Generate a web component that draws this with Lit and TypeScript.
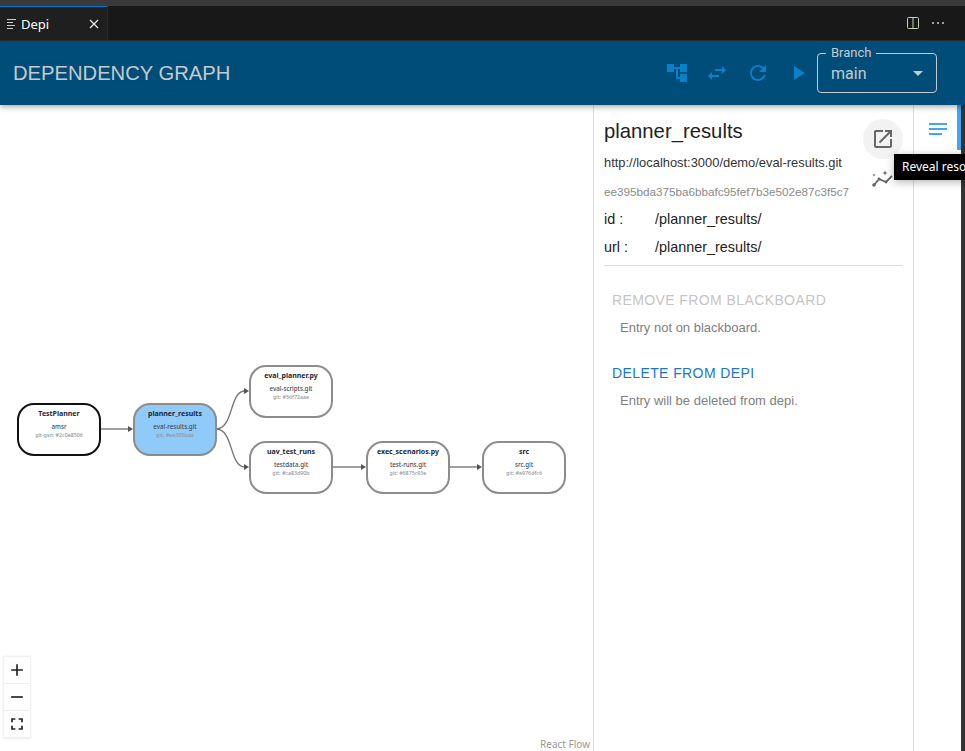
import { LitElement, html, css, svg } from "lit";
import { customElement } from "lit/decorators.js";

const mi = (d: string, size = 24) => html`<svg width=${size} height=${size} viewBox="0 0 24 24" fill="currentColor"><path d=${d}></path></svg>`;

const NODES = [
  { x: 17, y: 403, title: "TestPlanner", sub: "amsr", hash: "git-gsn: #2c0e8506", cls: "root" },
  { x: 133, y: 403, title: "planner_results", sub: "eval-results.git", hash: "git: #ee395bda", cls: "selected" },
  { x: 249, y: 365, title: "eval_planner.py", sub: "eval-scripts.git", hash: "git: #56f72aae", cls: "" },
  { x: 249, y: 441, title: "uav_test_runs", sub: "testdata.git", hash: "git: #ca83d90b", cls: "" },
  { x: 366, y: 441, title: "exec_scenarios.py", sub: "test-runs.git", hash: "git: #6875c93e", cls: "" },
  { x: 482, y: 441, title: "src", sub: "src.git", hash: "git: #e976dfc6", cls: "" },
];

const EDGES = [
  "M100 429 L129 429",
  "M216 429 C234 429 229 391 245 391",
  "M216 429 C234 429 229 467 245 467",
  "M332 467 L362 467",
  "M449 467 L478 467",
];

const ARROWS = [[133, 429], [249, 391], [249, 467], [366, 467], [482, 467]];

@customElement("app-root")
export class AppRoot extends LitElement {
  static styles = css`
    :host {
      display: flex;
      flex-direction: column;
      width: 965px;
      height: 751px;
      overflow: hidden;
      background: #fff;
      font-family: "Liberation Sans", sans-serif;
      position: relative;
    }
    .strip {
      height: 6px;
      background: #3a3a3a;
      flex: none;
    }
    .tabbar {
      height: 35px;
      flex: none;
      background: #181818;
      display: flex;
      justify-content: space-between;
      box-sizing: border-box;
      border-bottom: 1px solid #2b2b2b;
    }
    .tab {
      width: 108px;
      box-sizing: border-box;
      background: #1f1f1f;
      border-top: 1px solid #0078d4;
      border-right: 1px solid #2b2b2b;
      display: flex;
      align-items: center;
      padding: 0 7px;
      color: #fff;
      font: 13px "Noto Sans", sans-serif;
    }
    .tab .name {
      flex: 1;
    }
    .tab svg {
      display: block;
    }
    .actions {
      display: flex;
      align-items: center;
      gap: 11px;
      padding-right: 20px;
      color: #ccc;
    }
    .appbar {
      height: 64px;
      flex: none;
      background: #004d7a;
      display: flex;
      align-items: center;
      padding: 0 28px 0 13px;
      box-shadow: 0 2px 4px -1px rgba(0, 0, 0, 0.2), 0 4px 5px rgba(0, 0, 0, 0.14);
      position: relative;
      z-index: 2;
    }
    .appbar h1 {
      flex: 1;
      margin: 0;
      font-size: 20.2px;
      font-weight: 400;
      color: #c4cacd;
    }
    .tools {
      display: flex;
      align-items: center;
      color: #0a80c8;
      gap: 16.5px;
      margin-right: 7px;
    }
    .tools svg {
      display: block;
    }
    .branch {
      width: 120px;
      height: 40px;
      box-sizing: border-box;
      border: 1px solid #c4cacd;
      border-radius: 4px;
      display: flex;
      align-items: center;
      justify-content: space-between;
      padding: 0 13px;
      color: #c4cacd;
      font: 16px Roboto, sans-serif;
      position: relative;
    }
    .branch label {
      position: absolute;
      left: 8px;
      top: -9px;
      padding: 0 5px;
      background: #004d7a;
      font-size: 13px;
      line-height: 15px;
    }
    .caret {
      width: 0;
      height: 0;
      border-left: 5px solid transparent;
      border-right: 5px solid transparent;
      border-top: 5px solid #c4cacd;
    }
    .main {
      flex: 1;
      display: flex;
      min-height: 0;
    }
    .graph {
      width: 593px;
      flex: none;
      position: relative;
    }
    .graph > svg {
      position: absolute;
      left: 0;
      top: -105px;
      width: 593px;
      height: 751px;
    }
    .node {
      position: absolute;
      width: 84px;
      height: 53px;
      box-sizing: border-box;
      border: 2px solid #8c8c8c;
      border-radius: 17px;
      background: #fff;
      display: flex;
      flex-direction: column;
      align-items: center;
      padding-top: 4px;
      font-family: "Noto Sans", sans-serif;
      color: #3f4d5c;
      font-size: 6.2px;
      font-weight: 500;
      line-height: 8px;
    }
    .node.root {
      border-color: #111;
    }
    .node.selected {
      background: #90caf9;
    }
    .node b {
      font-size: 7px;
      line-height: 10px;
      color: #1d2733;
      margin-bottom: 4px;
    }
    .node .rev {
      color: #8f959b;
      font-size: 5.3px;
      line-height: 9px;
    }
    .zoom {
      position: absolute;
      left: 4px;
      bottom: 13px;
      width: 26px;
      background: #fefefe;
      box-shadow: 0 0 2px 1px rgba(0, 0, 0, 0.08);
      display: flex;
      flex-direction: column;
      color: #222;
    }
    .zoom div {
      height: 27px;
      box-sizing: border-box;
      border-bottom: 1px solid #eee;
      display: flex;
      align-items: center;
      justify-content: center;
    }
    .attribution {
      position: absolute;
      right: 3px;
      bottom: 0;
      font: 10px "Noto Sans", sans-serif;
      color: #999;
    }
    .panel {
      width: 321px;
      flex: none;
      box-sizing: border-box;
      border-left: 1px solid #ddd;
      border-right: 1px solid #ddd;
      padding: 0 10px;
      position: relative;
    }
    .panel h2 {
      margin: 13px 0 0;
      font-size: 20.3px;
      line-height: 26px;
      font-weight: 400;
      color: #222;
    }
    .url {
      margin-top: 10px;
      font-size: 12.9px;
      line-height: 18px;
      color: #333;
    }
    .sha {
      margin-top: 12px;
      font-size: 11.7px;
      line-height: 16px;
      color: #8a8a8a;
    }
    .row {
      display: flex;
      font-size: 14.4px;
      line-height: 20px;
      color: #222;
      margin-top: 8px;
    }
    .sha + .row {
      margin-top: 9px;
    }
    .row span:first-child {
      width: 51px;
    }
    hr {
      margin: 8px 0 0;
      border: 0;
      border-top: 1px solid #ddd;
    }
    .action {
      padding: 0 8px;
      margin-top: 25px;
      font-size: 14px;
      line-height: 18px;
      color: #1976d2;
      letter-spacing: 0.4px;
    }
    .action.off {
      color: #c4c4c4;
    }
    .note {
      padding: 0 16px;
      margin-top: 11px;
      font-size: 13px;
      line-height: 16px;
      color: #808080;
    }
    .action + .note + .action {
      margin-top: 28px;
    }
    .reveal {
      position: absolute;
      left: 269px;
      top: 14px;
      width: 40px;
      height: 40px;
      border-radius: 50%;
      background: #f2f2f2;
      color: #666;
      display: flex;
      align-items: center;
      justify-content: center;
    }
    .graphbtn {
      position: absolute;
      left: 276px;
      top: 62px;
      color: #666;
      display: block;
    }
    .tooltip {
      position: absolute;
      left: 894px;
      top: 154px;
      height: 26px;
      width: 110px;
      box-sizing: border-box;
      padding: 0 8px;
      background: #000;
      color: #fff;
      font: 12px/26px "Noto Sans", sans-serif;
      white-space: nowrap;
      box-shadow: 0 2px 8px rgba(0, 0, 0, 0.3);
      z-index: 3;
    }
    .side {
      width: 43px;
      flex: none;
      display: flex;
      justify-content: center;
      padding: 18px 0 0 5px;
      box-sizing: border-box;
    }
    .lines {
      width: 18px;
      display: flex;
      flex-direction: column;
      gap: 3px;
    }
    .lines i {
      display: block;
      height: 2px;
      background: #42a5f5;
    }
    .lines i:last-child {
      width: 13px;
    }
    .rail {
      width: 8px;
      flex: none;
      display: flex;
      align-items: flex-start;
    }
    .rail b {
      width: 4px;
      height: 45px;
      background: #42a5f5;
    }
    .rail i {
      width: 4px;
      height: 100%;
      background: #333;
      margin-left: auto;
    }
  `;

  render() {
    return html`
      <div class="strip"></div>
      <div class="tabbar">
        <div class="tab">
          <svg width="14" height="14" viewBox="0 0 14 14" fill="#ccc">
            <rect x="0" y="2" width="9" height="1"></rect>
            <rect x="0" y="5" width="6" height="1"></rect>
            <rect x="0" y="8" width="8" height="1"></rect>
            <rect x="0" y="11" width="6" height="1"></rect>
          </svg>
          <span class="name">Depi</span>
          <svg width="12" height="12" viewBox="0 0 12 12" stroke="#eee" stroke-width="1.2" fill="none">
            <path d="M2 2 L10 10 M10 2 L2 10"></path>
          </svg>
        </div>
        <div class="actions">
          <svg width="14" height="14" viewBox="0 0 14 14" fill="none" stroke="#c5d3b0" stroke-width="1">
            <rect x="1.5" y="1.5" width="11" height="11" rx="1"></rect>
            <path d="M7 1.5 V12.5"></path>
          </svg>
          <svg width="14" height="14" viewBox="0 0 14 14" fill="#ccc">
            <circle cx="2" cy="7" r="1"></circle>
            <circle cx="7" cy="7" r="1"></circle>
            <circle cx="12" cy="7" r="1"></circle>
          </svg>
        </div>
      </div>
      <div class="appbar">
        <h1>DEPENDENCY GRAPH</h1>
        <div class="tools">
          ${mi("M22 11V3h-7v3H9V3H2v8h7V8h2v10h4v3h7v-8h-7v3h-2V8h2v3z")}
          ${mi("M6.99 11 3 15l3.99 4v-3H14v-2H6.99v-3zM21 9l-3.99-4v3H10v2h7.01v3L21 9z")}
          ${mi("M17.65 6.35C16.2 4.9 14.21 4 12 4c-4.42 0-7.99 3.58-7.99 8s3.57 8 7.99 8c3.73 0 6.84-2.55 7.73-6h-2.08c-.82 2.33-3.04 4-5.65 4-3.31 0-6-2.69-6-6s2.69-6 6-6c1.66 0 3.14.69 4.22 1.78L13 11h7V4l-2.35 2.35z")}
          ${mi("M8 5v14l11-7z")}
        </div>
        <div class="branch">
          <label>Branch</label>
          <span>main</span>
          <span class="caret"></span>
        </div>
      </div>
      <div class="main">
        <div class="graph">
          <svg viewBox="0 0 593 751">
            ${EDGES.map((d) => svg`<path d=${d} fill="none" stroke="#777" stroke-width="1.4"></path>`)}
            ${ARROWS.map(([x, y]) => svg`<path d="M${x} ${y} l-5 -3 v6 z" fill="#555"></path>`)}
          </svg>
          ${NODES.map(
            (n) => html`
              <div class="node ${n.cls}" style="left:${n.x}px;top:${n.y - 105}px">
                <b>${n.title}</b>
                <span>${n.sub}</span>
                <span class="rev">${n.hash}</span>
              </div>
            `
          )}
          <div class="zoom">
            <div>${mi("M19 13h-6v6h-2v-6H5v-2h6V5h2v6h6v2z", 20)}</div>
            <div>${mi("M19 13H5v-2h14v2z", 20)}</div>
            <div>${mi("M7 14H5v5h5v-2H7v-3zm-2-4h2V7h3V5H5v5zm12 7h-3v2h5v-5h-2v3zM14 5v2h3v3h2V5h-5z", 20)}</div>
          </div>
          <span class="attribution">React Flow</span>
        </div>
        <div class="panel">
          <h2>planner_results</h2>
          <div class="url">http://localhost:3000/demo/eval-results.git</div>
          <div class="sha">ee395bda375ba6bbafc95fef7b3e502e87c3f5c7</div>
          <div class="row"><span>id :</span><span>/planner_results/</span></div>
          <div class="row"><span>url :</span><span>/planner_results/</span></div>
          <hr />
          <div class="action off">REMOVE FROM BLACKBOARD</div>
          <div class="note">Entry not on blackboard.</div>
          <div class="action">DELETE FROM DEPI</div>
          <div class="note">Entry will be deleted from depi.</div>
          <div class="reveal">
            ${mi("M19 19H5V5h7V3H5c-1.11 0-2 .9-2 2v14c0 1.1.89 2 2 2h14c1.1 0 2-.9 2-2v-7h-2v7zM14 3v2h3.59l-9.83 9.83 1.41 1.41L19 6.41V10h2V3h-7z")}
          </div>
          <svg class="graphbtn" width="24" height="24" viewBox="0 0 24 24" fill="currentColor">
            <path d="M4 18 L9 12 L16 15 L22 9" fill="none" stroke="currentColor" stroke-width="1.8"></path>
            <circle cx="4" cy="18" r="1.8"></circle>
            <circle cx="9" cy="12" r="1.4"></circle>
            <circle cx="16" cy="15" r="1.4"></circle>
            <path d="M4 6.5 l.5 1 1 .5 -1 .5 -.5 1 -.5 -1 -1 -.5 1 -.5z"></path>
            <path d="M15 3.5 l.7 1.8 1.8.7 -1.8.7 -.7 1.8 -.7 -1.8 -1.8 -.7 1.8 -.7z"></path>
          </svg>
        </div>
        <div class="side">
          <div class="lines"><i></i><i></i><i></i></div>
        </div>
        <div class="rail"><b></b><i></i></div>
      </div>
      <div class="tooltip">Reveal resource</div>
    `;
  }
}
